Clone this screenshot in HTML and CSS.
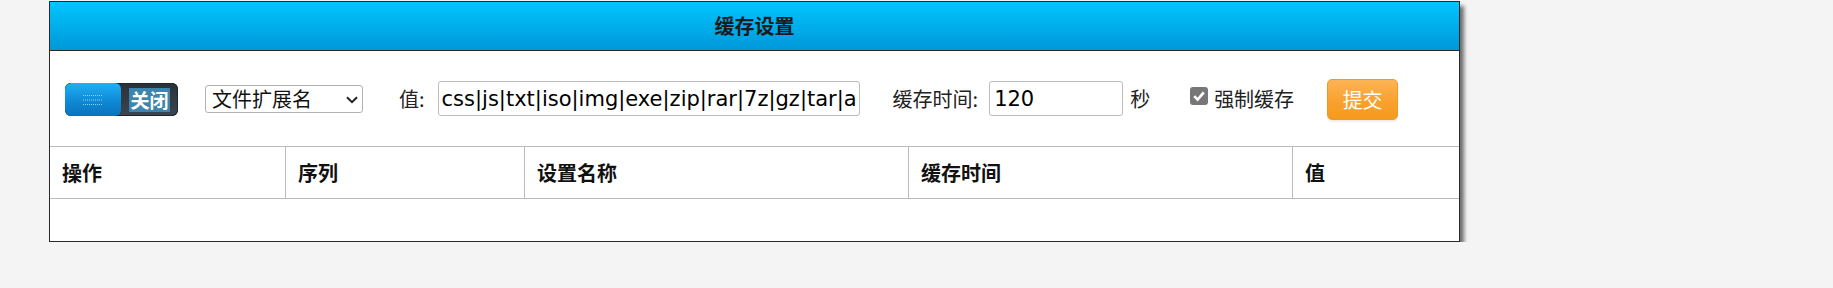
FILE: index.html
```html
<!DOCTYPE html>
<html lang="zh-CN">
<head>
<meta charset="utf-8">
<title>缓存设置</title>
<link rel="stylesheet" href="styles.css">
</head>
<body>
<div class="panel">
  <div class="panel-head">缓存设置</div>
  <div class="toolbar">
    <span class="switch">
      <span class="switch-knob">
        <svg class="knob-lines" width="22" height="12" viewBox="0 0 22 12">
          <line x1="1" y1="1.5" x2="21" y2="1.5"/>
          <line x1="1" y1="6" x2="21" y2="6"/>
          <line x1="1" y1="10.5" x2="21" y2="10.5"/>
        </svg>
      </span>
      <span class="switch-track"><span class="switch-text">关闭</span></span>
    </span>
    <span class="select-wrap">
      <select class="type-select">
        <option>文件扩展名</option>
        <option>文件夹</option>
      </select>
      <svg class="select-arrow" width="12" height="8" viewBox="0 0 12 8"><path d="M1 1.2 L6 6.2 L11 1.2"/></svg>
    </span>
    <label class="field-label label-value">值:</label>
    <input class="text-input value-input" type="text" value="css|js|txt|iso|img|exe|zip|rar|7z|gz|tar|apk|ipa|dmg|deb|rpm|msi|mp3|mp4|flv">
    <label class="field-label label-time">缓存时间:</label>
    <input class="text-input time-input" type="text" value="120">
    <span class="unit">秒</span>
    <label class="check">
      <span class="check-box">
        <svg width="18" height="18" viewBox="0 0 18 18"><path d="M4.2 9.2 L7.6 12.6 L13.8 5.4"/></svg>
      </span>
      <span class="check-text">强制缓存</span>
    </label>
    <button class="btn-submit" type="button">提交</button>
  </div>
  <table class="grid">
    <thead>
      <tr>
        <th class="c1">操作</th>
        <th class="c2">序列</th>
        <th class="c3">设置名称</th>
        <th class="c4">缓存时间</th>
        <th class="c5">值</th>
      </tr>
    </thead>
    <tbody>
      <tr class="empty-row"><td colspan="5"></td></tr>
    </tbody>
  </table>
</div>
</body>
</html>
```

FILE: styles.css
```css
html, body {
  margin: 0;
  padding: 0;
}
body {
  background: #f4f4f4;
  font-family: "Noto Sans CJK SC", "Noto Sans", sans-serif;
  color: #222;
}
.panel {
  box-sizing: border-box;
  width: 1411px;
  margin: 1px 0 0 49px;
  background: #fff;
  border: 1px solid #2a2a2a;
  box-shadow: 4px 5px 4px #6e6e6e;
}
.panel-head {
  height: 48px;
  border-bottom: 1px solid #2a2a2a;
  background: linear-gradient(#00c6ff, #0097d8);
  text-align: center;
  font-size: 20px;
  font-weight: bold;
  line-height: 48px;
  color: #1b1b1b;
}
.toolbar {
  height: 95px;
  display: flex;
  align-items: center;
  padding-left: 15px;
  font-size: 20px;
  line-height: 24px;
}
.switch {
  display: flex;
  width: 113px;
  height: 33px;
  border-radius: 6px;
  overflow: hidden;
  background: linear-gradient(#2a3138, #3a4650);
  box-shadow: inset 0 0 0 1px #1e252c;
  margin-top: 2px;
}
.switch-knob {
  width: 56px;
  display: flex;
  align-items: center;
  justify-content: center;
  border-radius: 6px;
  background: linear-gradient(#1eb0f6, #0e86d2 60%, #0a73bd);
}
.knob-lines line {
  stroke: #8fd7f7;
  stroke-width: 1;
  stroke-dasharray: 1 1;
}
.switch-track {
  flex: 1;
  display: flex;
  align-items: center;
  justify-content: center;
}
.switch-text {
  background: #3f84ad;
  color: #fff;
  font-weight: bold;
  font-size: 19px;
  line-height: 24px;
  padding: 0 1px;
}
.select-wrap {
  position: relative;
  display: block;
  margin-left: 27px;
}
.type-select {
  display: block;
  appearance: none;
  -webkit-appearance: none;
  box-sizing: border-box;
  width: 158px;
  height: 28px;
  margin: 0;
  padding: 0 0 0 6px;
  border: 1px solid #b3b3b3;
  border-radius: 3px;
  background: #fff;
  font-family: "Noto Sans CJK SC", sans-serif;
  font-size: 20px;
  line-height: 26px;
  color: #111;
}
.select-arrow {
  position: absolute;
  right: 5px;
  top: 11px;
  pointer-events: none;
}
.select-arrow path {
  fill: none;
  stroke: #222;
  stroke-width: 2;
}
.field-label {
  white-space: nowrap;
}
.label-value {
  margin-left: 36px;
  margin-right: 13px;
}
.label-time {
  margin-left: 33px;
  margin-right: 11px;
}
.text-input {
  box-sizing: border-box;
  height: 35px;
  margin: 0;
  padding: 0 3px;
  border: 1px solid #bcbcbc;
  border-radius: 3px;
  background: #fff;
  font-family: "DejaVu Sans", Verdana, sans-serif;
  font-size: 21px;
  color: #000;
  outline: none;
}
.value-input {
  width: 422px;
}
.time-input {
  width: 134px;
  padding-left: 4px;
}
.unit {
  margin-left: 7px;
}
.check {
  display: flex;
  align-items: center;
  margin-left: 40px;
}
.check-box {
  display: block;
  width: 18px;
  height: 18px;
  border-radius: 3px;
  background: #777;
  margin-top: -5px;
}
.check-box svg {
  display: block;
}
.check-box path {
  fill: none;
  stroke: #fff;
  stroke-width: 2.6;
}
.check-text {
  margin-left: 6px;
}
.btn-submit {
  box-sizing: border-box;
  width: 71px;
  height: 41px;
  margin: 2px 0 0 33px;
  padding: 0;
  border: 1px solid #ec9a2a;
  border-radius: 5px;
  background: linear-gradient(#fdb456, #f9a12d 55%, #f59a1c);
  color: #fff;
  font-family: "Noto Sans CJK SC", sans-serif;
  font-size: 20px;
  line-height: 24px;
  box-shadow: 0 2px 2px #f0ede8;
}
.grid {
  width: 1409px;
  table-layout: fixed;
  border-collapse: separate;
  border-spacing: 0;
  border-top: 1px solid #bbb;
}
.grid th {
  box-sizing: border-box;
  height: 52px;
  padding: 0 0 0 12px;
  border-bottom: 1px solid #bbb;
  border-left: 1px solid #bbb;
  text-align: left;
  font-size: 20px;
  font-weight: bold;
  color: #111;
  line-height: 24px;
}
.grid th.c1 { width: 235px; border-left: none; padding-left: 12px; }
.grid th.c2 { width: 239px; }
.grid th.c3 { width: 384px; }
.grid th.c4 { width: 384px; }
.grid th.c5 { width: 167px; }
.empty-row td {
  height: 42px;
  padding: 0;
}
```
